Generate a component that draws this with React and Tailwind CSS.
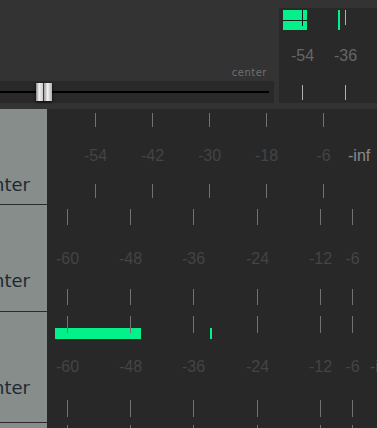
const rows = [
  {
    h: 96,
    ticks: [48, 105, 162, 219, 276],
    labels: ['-54', '-42', '-30', '-18', '-6'],
    top: [4, 18],
    mid: 52,
    bottom: [75, 89],
    inf: 301,
    infColor: '#8a8a8a',
  },
  {
    h: 107,
    ticks: [20, 83, 146, 210, 273, 305],
    labels: ['-60', '-48', '-36', '-24', '-12', '-6'],
    top: [4, 20],
    mid: 59,
    bottom: [84, 100],
  },
  {
    h: 111,
    ticks: [20, 83, 146, 210, 273, 305],
    labels: ['-60', '-48', '-36', '-24', '-12', '-6'],
    top: [4, 21],
    mid: 60,
    bottom: [88, 105],
    inf: 323,
    infColor: '#4a4a4a',
    bars: [
      [8, 86],
      [163, 2],
    ],
  },
  {
    h: 20,
    ticks: [20, 83, 146, 210, 273, 305],
    labels: [],
    top: [2, 19],
  },
];

const Meter = ({ row }) => (
  <svg width="330" height={row.h} className="block shrink-0">
    {row.bars?.map(([x, w]) => (
      <rect key={x} x={x} y={row.top[0] + 12} width={w} height="11" fill="#03f08b" />
    ))}
    {row.ticks.map((x) => (
      <g key={x} stroke="#727272" strokeWidth="1">
        <line x1={x + 0.5} x2={x + 0.5} y1={row.top[0]} y2={row.top[1]} />
        {row.bottom && <line x1={x + 0.5} x2={x + 0.5} y1={row.bottom[0]} y2={row.bottom[1]} />}
      </g>
    ))}
    {row.labels.map((t, i) => (
      <text
        key={t + i}
        x={row.ticks[i] + 0.5}
        y={row.mid}
        textAnchor="middle"
        fill="#444444"
        fontSize="16"
        fontFamily="Liberation Sans, Arial, sans-serif"
      >
        {t}
      </text>
    ))}
    {row.inf && (
      <text x={row.inf} y={row.mid} fill={row.infColor} fontSize="16" fontFamily="Liberation Sans, Arial, sans-serif">
        -inf
      </text>
    )}
  </svg>
);

export default function App() {
  return (
    <div className="w-[377px] h-[428px] overflow-hidden bg-[#333333] flex flex-col font-['Liberation_Sans',Arial,sans-serif]">
      <div className="flex h-[103px] shrink-0">
        <div className="w-[279px] flex flex-col">
          <div className="flex-1 flex items-end justify-end pr-[12px] pb-[3px]">
            <span className="text-[10px] leading-none tracking-[0.5px] text-[#707070] font-['DejaVu_Sans',sans-serif]">
              center
            </span>
          </div>
          <div className="relative h-[22px] mr-[5px] bg-[#292929] flex items-center">
            <div className="h-[2px] w-[269px] bg-black" />
            <div className="absolute left-[36px] top-[2px] w-[16px] h-[18px] flex shadow-[0_1px_3px_rgba(0,0,0,0.8)]">
              <div className="w-[8px] h-full bg-[linear-gradient(90deg,#8a8a8a,#f2f2f2_45%,#c8c8c8)] border-r border-[#3a3a3a]" />
              <div className="w-[8px] h-full bg-[linear-gradient(90deg,#9a9a9a,#f2f2f2_45%,#b0b0b0)]" />
            </div>
          </div>
        </div>
        <div className="flex-1 mt-[8px] bg-[#292929]">
          <svg width="98" height="95" className="block">
            <rect x="4" y="2" width="24" height="20" fill="#03f08b" />
            <line x1="4" x2="28" y1="12.5" y2="12.5" stroke="#1a1a1a" />
            <line x1="23.5" x2="23.5" y1="2" y2="18" stroke="#1a1a1a" />
            <rect x="59" y="2" width="2" height="20" fill="#03f08b" />
            <line x1="66.5" x2="66.5" y1="2" y2="17" stroke="#b0b0b0" />
            <text x="23.5" y="53" textAnchor="middle" fill="#666666" fontSize="16" fontFamily="Liberation Sans, Arial, sans-serif">
              -54
            </text>
            <text x="66.5" y="53" textAnchor="middle" fill="#666666" fontSize="16" fontFamily="Liberation Sans, Arial, sans-serif">
              -36
            </text>
            <line x1="23.5" x2="23.5" y1="77" y2="92" stroke="#b0b0b0" />
            <line x1="66.5" x2="66.5" y1="77" y2="92" stroke="#b0b0b0" />
          </svg>
        </div>
      </div>
      <div className="h-[6px] shrink-0" />
      <div className="flex flex-1 min-h-0">
        <div className="w-[47px] shrink-0 bg-[#878d8b] flex flex-col">
          {rows.map((r, i) => (
            <div
              key={i}
              style={{ height: r.h }}
              className={`shrink-0 flex justify-end items-end pr-[17px] ${i < 3 ? 'border-b border-[#2b2b2b]' : ''}`}
            >
              {i < 3 && (
                <span
                  className={`whitespace-nowrap text-[18px] leading-none text-[#1e2933] font-['DejaVu_Sans',sans-serif] ${
                    i === 0 ? 'mb-[10px]' : i === 1 ? 'mb-[21px]' : 'mb-[25px]'
                  }`}
                >
                  center
                </span>
              )}
            </div>
          ))}
        </div>
        <div className="flex-1 bg-[#282828] flex flex-col overflow-hidden">
          {rows.map((r, i) => (
            <Meter key={i} row={r} />
          ))}
        </div>
      </div>
    </div>
  );
}
